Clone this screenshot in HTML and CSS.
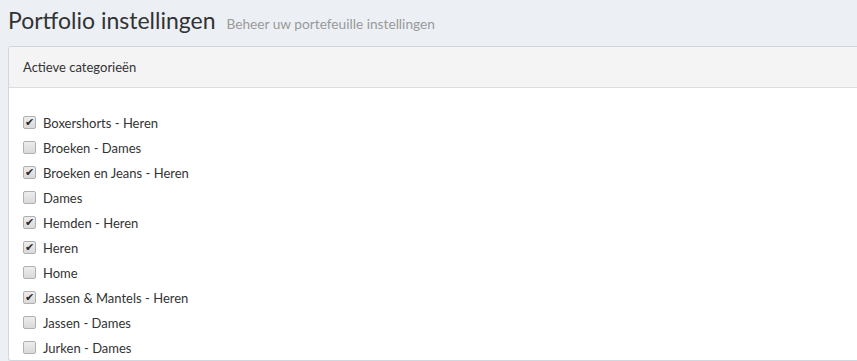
FILE: index.html
```html
<!DOCTYPE html>
<html lang="nl">
  <head>
    <meta charset="UTF-8" />
    <meta name="viewport" content="width=device-width, initial-scale=1.0" />
    <title>Portfolio instellingen</title>
    <link rel="stylesheet" href="styles.css">
  </head>
  <body>
    <section class="content-header">
      <h1>Portfolio instellingen <small>Beheer uw portefeuille instellingen</small></h1>
    </section>

    <div class="box">
      <div class="box-header">
        <h3>Actieve categorieën</h3>
      </div>
      <div class="box-body">
        <label class="check"><input type="checkbox" checked /> Boxershorts - Heren</label>
        <label class="check"><input type="checkbox" /> Broeken - Dames</label>
        <label class="check"><input type="checkbox" checked /> Broeken en Jeans - Heren</label>
        <label class="check"><input type="checkbox" /> Dames</label>
        <label class="check"><input type="checkbox" checked /> Hemden - Heren</label>
        <label class="check"><input type="checkbox" checked /> Heren</label>
        <label class="check"><input type="checkbox" /> Home</label>
        <label class="check"><input type="checkbox" checked /> Jassen &amp; Mantels - Heren</label>
        <label class="check"><input type="checkbox" /> Jassen - Dames</label>
        <label class="check"><input type="checkbox" /> Jurken - Dames</label>
      </div>
    </div>
  </body>
</html>
```

FILE: styles.css
```css
* {
  margin: 0;
  padding: 0;
  box-sizing: border-box;
}

body {
  background: #ecf0f5;
  font-family: Lato, "Open Sans", sans-serif;
  color: #333;
  overflow: hidden;
  padding: 0 8px;
}

.content-header {
  padding: 5px 0 0;
  height: 46px;
}

.content-header h1 {
  font-size: 23px;
  font-weight: 400;
  color: #333;
  line-height: 30px;
}

.content-header small {
  font-size: 13.7px;
  color: #999;
  padding-left: 5px;
}

.box {
  background: white;
  border: 1px solid #d2d6de;
  border-right: none;
  border-radius: 3px 0 0 3px;
  margin-right: -20px;
}

.box-header {
  background: #f4f4f4;
  border-bottom: 1px solid #ddd;
  height: 41px;
  padding: 0 14px;
  display: flex;
  align-items: center;
}

.box-header h3 {
  font-size: 13px;
  font-weight: 400;
  color: #333;
}

.box-body {
  padding: 22px 14px 0;
  display: flex;
  flex-direction: column;
}

.check {
  display: flex;
  align-items: center;
  gap: 7px;
  height: 25px;
  font-size: 13px;
  color: #333;
}

.check input {
  appearance: none;
  width: 13px;
  height: 13px;
  border: 1px solid #b0b0b0;
  border-radius: 2px;
  background: linear-gradient(#ededed, #d9d9d9);
  display: flex;
  align-items: center;
  justify-content: center;
}

.check input:checked::before {
  content: "✔";
  font-size: 11px;
  line-height: 1;
  color: #2b2b2b;
  font-family: "DejaVu Sans", sans-serif;
}
```
